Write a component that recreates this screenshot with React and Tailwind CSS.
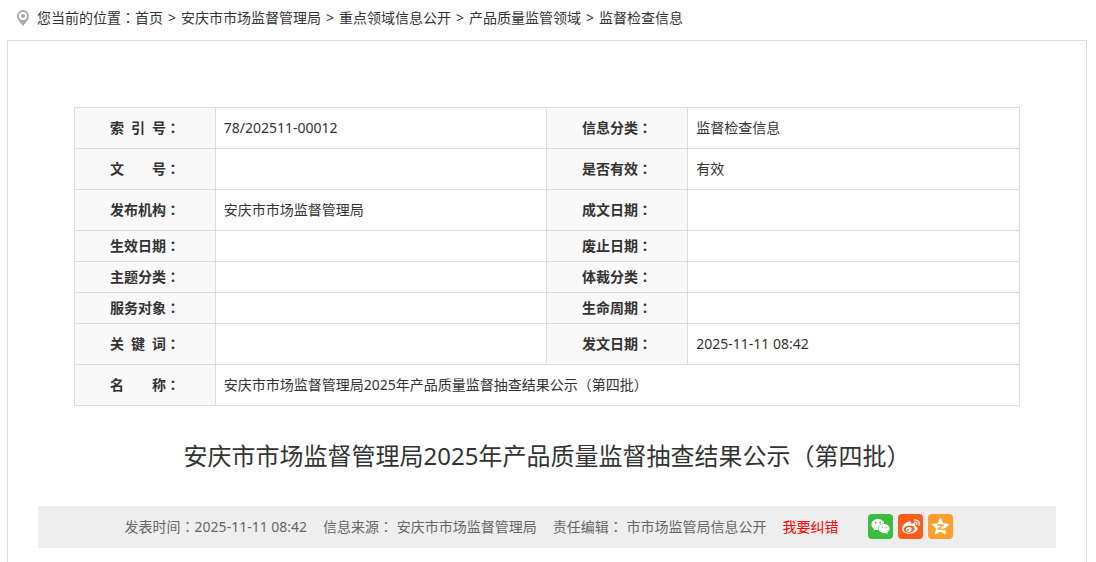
import { FaWeixin, FaWeibo } from 'react-icons/fa';

const crumbs = ['首页', '安庆市市场监督管理局', '重点领域信息公开', '产品质量监管领域', '监督检查信息'];

const rows = [
  { tall: true, cells: [['索\u2002引\u2002号', '78/202511-00012'], ['信息分类', '监督检查信息']] },
  { tall: true, cells: [['文\u3000\u3000号', ''], ['是否有效', '有效']] },
  { tall: true, cells: [['发布机构', '安庆市市场监督管理局'], ['成文日期', '']] },
  { tall: false, cells: [['生效日期', ''], ['废止日期', '']] },
  { tall: false, cells: [['主题分类', ''], ['体裁分类', '']] },
  { tall: false, cells: [['服务对象', ''], ['生命周期', '']] },
  { tall: true, cells: [['关\u2002键\u2002词', ''], ['发文日期', '2025-11-11 08:42']] },
  { tall: true, cells: [['名\u3000\u3000称', '安庆市市场监督管理局2025年产品质量监督抽查结果公示（第四批）']] },
];

// Full-width colon, centred in its em box.
function Colon() {
  return (
    <span lang="zh-Hant" className="font-['Noto_Sans','Noto_Sans_CJK_TC',sans-serif]">
      ：
    </span>
  );
}

function PinIcon() {
  return (
    <svg className="h-4 w-3 shrink-0" viewBox="0 0 12 16" aria-hidden="true">
      <path
        fill="#a9a9a9"
        fillRule="evenodd"
        d="M6 0a6 6 0 0 1 6 6c0 2.6-1.6 4.5-3 6.200L6 16l-3-3.800C1.600 10.500 0 8.600 0 6a6 6 0 0 1 6-6Zm0 1.900a4.100 4.100 0 1 0 0 8.200 4.100 4.100 0 0 0 0-8.200Z"
      />
      <circle cx="6" cy="6" r="2" fill="#a9a9a9" />
    </svg>
  );
}

function QzoneIcon() {
  return (
    <svg className="size-[19px]" viewBox="0 0 24 24" aria-hidden="true">
      <path
        fill="currentColor"
        stroke="currentColor"
        strokeWidth="1.600"
        strokeLinejoin="round"
        d="M12 2.200l2.900 6.400 7 .8-5.200 4.700 1.500 6.900L12 17.600 5.800 21l1.500-6.900L2.100 9.400l7-.8Z"
      />
      <path
        fill="none"
        stroke="#ff9f2e"
        strokeWidth="1.700"
        strokeLinejoin="round"
        strokeLinecap="round"
        d="M8.200 10.200q3.500-.7 7.200 0L9.200 15q4.200 1 8.600.2"
      />
    </svg>
  );
}

function Breadcrumb() {
  return (
    <nav aria-label="breadcrumb" className="flex h-10 items-center pb-1 pl-[17px] whitespace-nowrap">
      <PinIcon />
      <span className="ml-2">
        您当前的位置
        <Colon />
      </span>
      {crumbs.map((c, i) => (
        <span key={c} className="flex">
          {i > 0 && <span className="px-[5px]">&gt;</span>}
          <a href="#" className="hover:underline">
            {c}
          </a>
        </span>
      ))}
    </nav>
  );
}

function InfoTable() {
  return (
    <table className="w-full table-fixed border-collapse">
      <colgroup>
        <col className="w-[14.9%]" />
        <col className="w-[35%]" />
        <col className="w-[15%]" />
        <col className="w-[35.1%]" />
      </colgroup>
      <tbody>
        {rows.map((r) => (
          <tr key={r.cells[0][0]} className={r.tall ? 'h-[41px]' : 'h-[31px]'}>
            {r.cells.map(([label, value]) => [
              <th key={label} scope="row" className="border border-[#dddddd] bg-[#f9f9f9] p-0 text-center font-bold">
                {label}
                <Colon />
              </th>,
              <td
                key={label + 'v'}
                colSpan={r.cells.length === 1 ? 3 : 1}
                className="border border-[#dddddd] px-2 py-0"
              >
                {value}
              </td>,
            ])}
          </tr>
        ))}
      </tbody>
    </table>
  );
}

function MetaBar() {
  return (
    <div className="mx-[30px] flex h-[42px] items-center justify-center bg-[#eeeeee] pr-4 pb-px whitespace-nowrap text-[#666666]">
      <div className="flex gap-4">
        <span>
          发表时间
          <Colon />
          2025-11-11 08:42
        </span>
        <span>
          信息来源
          <Colon /> 安庆市市场监督管理局
        </span>
        <span>
          责任编辑
          <Colon /> 市市场监管局信息公开
        </span>
        <a href="#" className="text-[#ff0000]">
          我要纠错
        </a>
      </div>
      <div className="ml-[30px] flex gap-[5px] text-white">
        <button type="button" aria-label="微信" className="flex size-[25px] items-center justify-center rounded bg-[#3bbe3f]">
          <FaWeixin className="size-[19px]" />
        </button>
        <button type="button" aria-label="微博" className="flex size-[25px] items-center justify-center rounded bg-[#ff5c1c]">
          <FaWeibo className="size-[18px]" />
        </button>
        <button type="button" aria-label="QQ空间" className="flex size-[25px] items-center justify-center rounded bg-[#ff9f2e]">
          <QzoneIcon />
        </button>
      </div>
    </div>
  );
}

export default function App() {
  return (
    <div
      lang="zh-CN"
      className="flex min-h-screen flex-col bg-white font-['Noto_Sans','Noto_Sans_CJK_SC',sans-serif] text-sm text-[#333333]"
    >
      <Breadcrumb />
      <main className="mr-[9px] ml-[7px] flex-1 border border-b-0 border-[#dddddd] pt-[66px]">
        <div className="px-[66px]">
          <InfoTable />
        </div>
        <h1 className="mt-8 mb-8 text-center text-2xl leading-9 font-normal">
          安庆市市场监督管理局2025年产品质量监督抽查结果公示（第四批）
        </h1>
        <MetaBar />
      </main>
    </div>
  );
}
